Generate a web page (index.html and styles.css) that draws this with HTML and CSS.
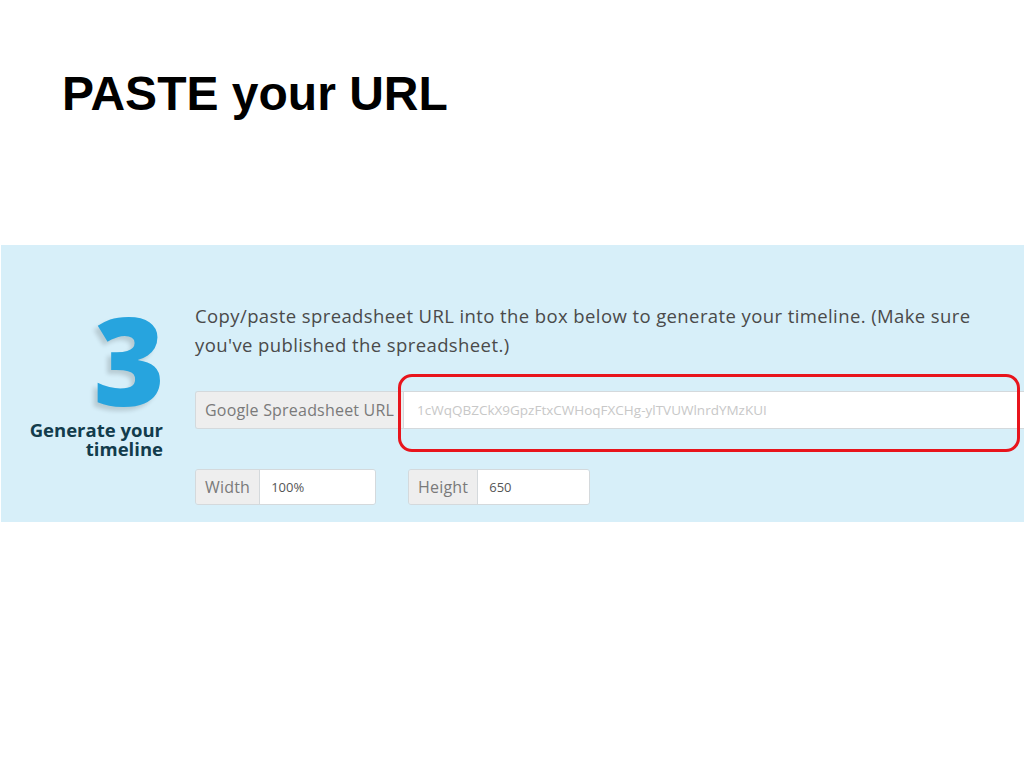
FILE: index.html
```html
<!DOCTYPE html>
<html lang="en">
<head>
<meta charset="utf-8">
<title>PASTE your URL</title>
<link rel="stylesheet" href="styles.css">
</head>
<body>
<h1 class="title">PASTE your URL</h1>
<section class="panel">
  <div class="step">
    <div class="step-num">3</div>
    <div class="step-label">Generate your<br>timeline</div>
  </div>
  <div class="content">
    <p class="intro">Copy/paste spreadsheet URL into the box below to generate your timeline. (Make sure you've published the spreadsheet.)</p>
    <div class="url-row">
      <div class="group group-url">
        <span class="addon">Google Spreadsheet URL</span>
        <span class="field placeholder">1cWqQBZCkX9GpzFtxCWHoqFXCHg-ylTVUWlnrdYMzKUI</span>
      </div>
      <div class="highlight"></div>
    </div>
    <div class="size-row">
      <div class="group group-w">
        <span class="addon">Width</span>
        <span class="field">100%</span>
      </div>
      <div class="group group-h">
        <span class="addon">Height</span>
        <span class="field">650</span>
      </div>
    </div>
  </div>
</section>
</body>
</html>
```
FILE: styles.css
```css
html, body {
  margin: 0;
  padding: 0;
  background: #ffffff;
}
body {
  width: 1024px;
  height: 768px;
  overflow: hidden;
}
.title {
  margin: 0;
  padding: 68px 0 0 62px;
  height: 245px;
  box-sizing: border-box;
  font-family: "Liberation Sans", Arial, sans-serif;
  font-weight: bold;
  font-size: 48px;
  line-height: 52px;
  color: #000;
}
.panel {
  margin-left: 1px;
  height: 277px;
  background: #d7eff9;
  display: flex;
  font-family: "Open Sans", "Noto Sans", sans-serif;
}
.step {
  width: 162px;
  flex: none;
  display: flex;
  flex-direction: column;
  align-items: flex-end;
  padding-top: 56px;
  box-sizing: border-box;
}
.step-num {
  font-family: "Open Sans", sans-serif;
  font-weight: 800;
  font-size: 122px;
  line-height: 116px;
  color: #27a4de;
  text-shadow: -4px 4px 4px rgba(0, 0, 0, 0.15);
  margin-right: -2px;
  height: 116px;
}
.step-label {
  margin-top: 3px;
  text-align: right;
  font-weight: 700;
  font-size: 18.5px;
  line-height: 19px;
  color: #123c4c;
}
.content {
  flex: 1;
  padding-left: 32px;
  padding-top: 56px;
  min-width: 0;
}
.intro {
  margin: 0;
  font-size: 18.5px;
  letter-spacing: 0.4px;
  line-height: 29px;
  color: #4a4a4a;
  width: 800px;
}
.url-row {
  position: relative;
  margin-top: 32px;
}
.group {
  display: flex;
  height: 36px;
  box-sizing: border-box;
  border: 1px solid #d4d9dc;
  border-radius: 3px;
  overflow: hidden;
  font-size: 16px;
  letter-spacing: 0.2px;
}
.group-url {
  height: 38px;
  border-right: none;
  border-radius: 3px 0 0 3px;
}
.addon {
  background: #eeeeee;
  color: #7a7a7a;
  padding: 0 9px;
  display: flex;
  align-items: center;
  border-right: 1px solid #d4d9dc;
}
.field {
  background: #ffffff;
  color: #555;
  font-size: 13px;
  letter-spacing: 0;
  padding: 0 11px;
  display: flex;
  align-items: center;
  flex: 1;
}
.group-url .field {
  padding-left: 13px;
}
.placeholder {
  color: #c8c8c8;
  font-size: 13.5px;
}
.highlight {
  position: absolute;
  left: 203px;
  top: -17px;
  width: 622px;
  height: 78px;
  box-sizing: border-box;
  border: 3px solid #e8141c;
  border-radius: 14px;
  pointer-events: none;
}
.size-row {
  display: flex;
  gap: 32px;
  margin-top: 40px;
}
.group-w {
  width: 181px;
}
.group-h {
  width: 182px;
}
```
